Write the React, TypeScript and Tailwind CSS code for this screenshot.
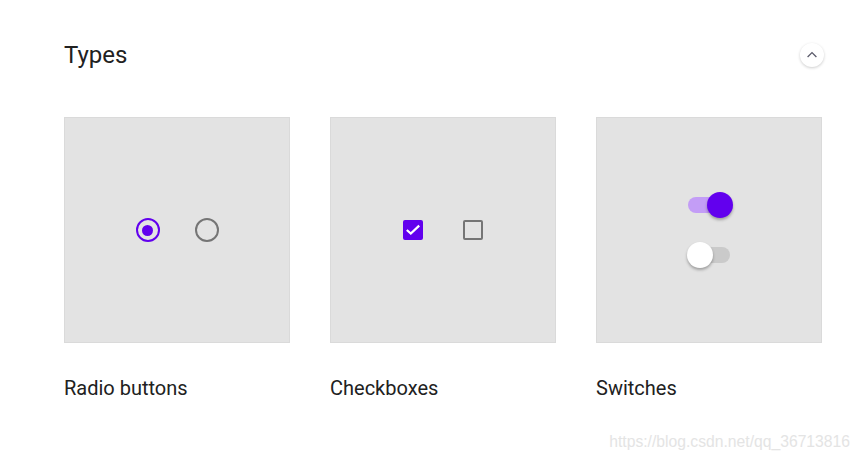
import React from 'react';

const Card = ({ children }: { children: React.ReactNode }) => (
    <div className="w-[226px] h-[226px] bg-[#e3e3e3] border border-[#dadada] flex items-center justify-center">
        {children}
    </div>
);

const Switch = ({ on }: { on: boolean }) => (
    <div className="relative w-[42px] h-[26px]">
        <div
            className={`absolute left-0 top-[5px] w-[42px] h-[16px] rounded-full ${
                on ? 'bg-[#c39df6]' : 'bg-[#cacaca]'
            }`}
        ></div>
        <div
            className={`absolute top-0 w-[26px] h-[26px] rounded-full shadow-[0_2px_3px_rgba(0,0,0,0.3)] ${
                on ? 'left-[19px] bg-[#6200ee]' : 'left-[-1px] bg-white'
            }`}
        ></div>
    </div>
);

const App = () => {
    const items = [
        {
            label: 'Radio buttons',
            content: (
                <div className="flex items-center gap-[35px]">
                    <div className="w-6 h-6 rounded-full border-[2.5px] border-[#6200ee] flex items-center justify-center">
                        <div className="w-[11px] h-[11px] rounded-full bg-[#6200ee]"></div>
                    </div>
                    <div className="w-6 h-6 rounded-full border-[2.5px] border-[#757575]"></div>
                </div>
            ),
        },
        {
            label: 'Checkboxes',
            content: (
                <div className="flex items-center gap-[40px]">
                    <div className="w-5 h-5 rounded-[2px] bg-[#6200ee]">
                        <svg width="20" height="20" viewBox="0 0 20 20" fill="none">
                            <path d="M3.8 10 L7.8 13.6 L16.2 5.6" stroke="white" strokeWidth="2.2" />
                        </svg>
                    </div>
                    <div className="w-5 h-5 rounded-[2px] border-[2.5px] border-[#757575]"></div>
                </div>
            ),
        },
        {
            label: 'Switches',
            content: (
                <div className="flex flex-col items-center gap-[24px]">
                    <Switch on={true} />
                    <Switch on={false} />
                </div>
            ),
        },
    ];

    return (
        <div className="relative w-[862px] h-[461px] bg-white pl-[64px] pr-[40px] pt-[39px] text-[#212121] font-['Roboto',sans-serif]">
            {/* Header */}
            <div className="flex items-center justify-between h-[32px]">
                <h2 className="text-[24px] leading-[32px] font-normal">Types</h2>
                <button className="w-[24px] h-[24px] -mr-[2px] rounded-full bg-white shadow-[0_1px_3px_rgba(0,0,0,0.2)] flex items-center justify-center">
                    <svg width="10" height="10" viewBox="0 0 10 10" fill="none">
                        <path d="M0.6 7 L5 2.6 L9.4 7" stroke="#5a5a6a" strokeWidth="1.3" />
                    </svg>
                </button>
            </div>

            {/* Cards */}
            <div className="mt-[46px] grid grid-cols-[226px_226px_226px] gap-x-[40px]">
                {items.map((item) => (
                    <div key={item.label} className="flex flex-col">
                        <Card>{item.content}</Card>
                        <div className="mt-[31px] text-[20px] leading-[28px]">{item.label}</div>
                    </div>
                ))}
            </div>

            <div className="absolute right-[12px] bottom-[9px] text-[15.7px] leading-[20px] text-[#e4e4e4] font-['Liberation_Sans',sans-serif]">
                https://blog.csdn.net/qq_36713816
            </div>
        </div>
    );
};

export default App;
